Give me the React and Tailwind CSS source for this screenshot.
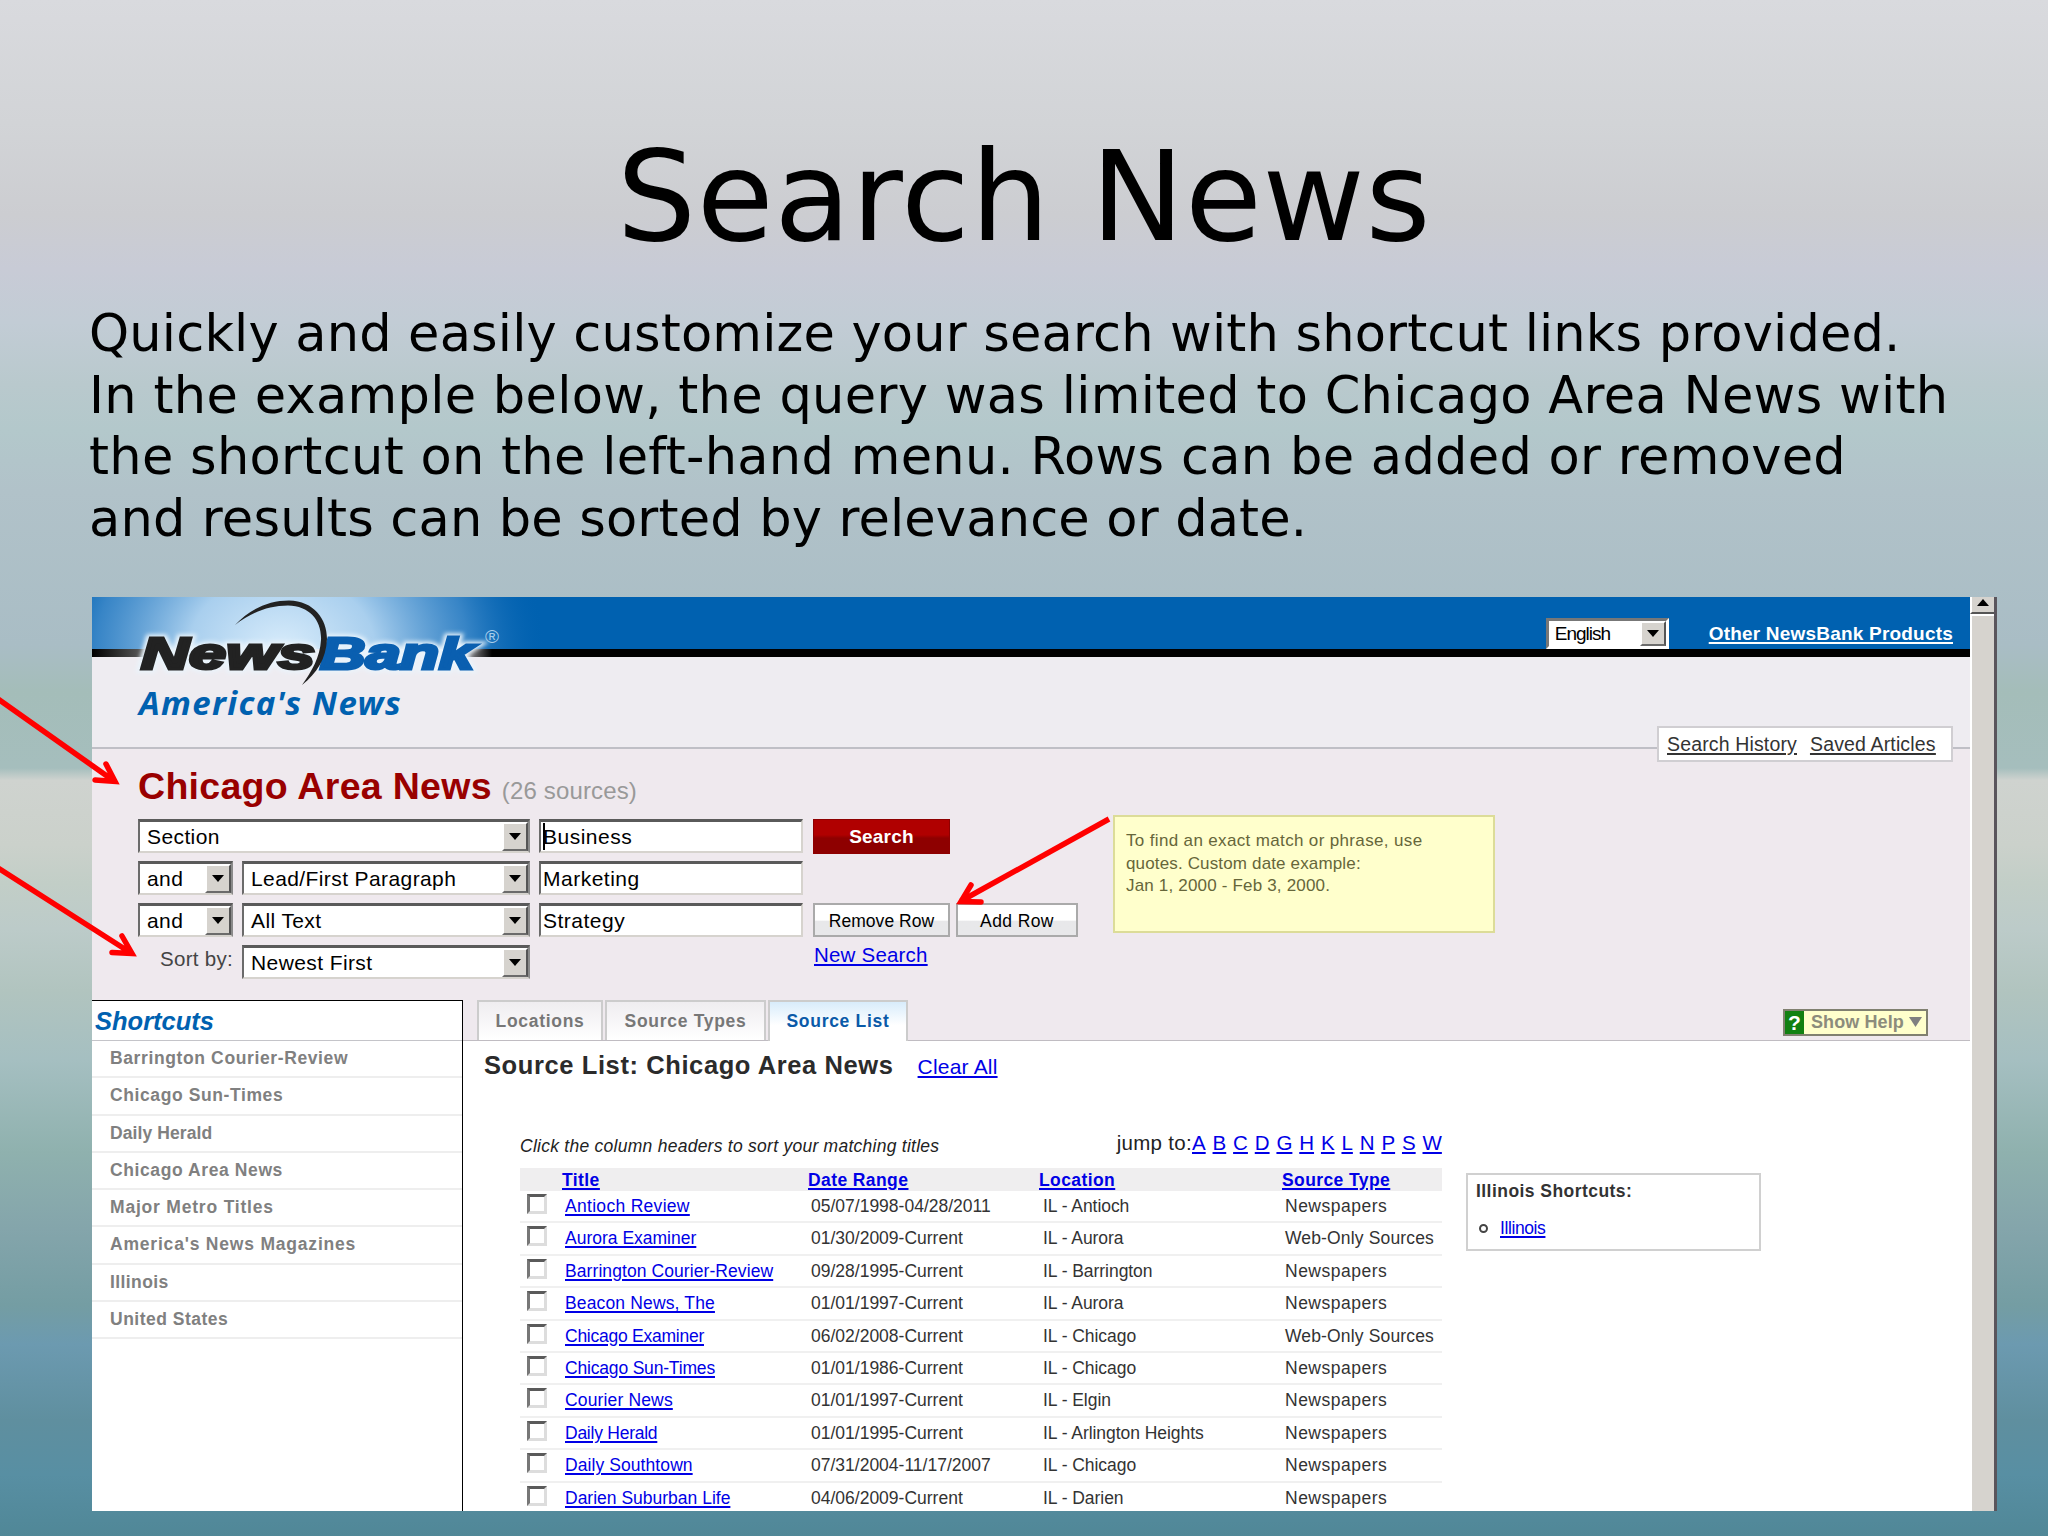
import React from 'react'

const shortcuts = [
    { name: "Barrington Courier-Review", tracking: "tracking-[0.62px]" },
    { name: "Chicago Sun-Times", tracking: "tracking-[0.6px]" },
    { name: "Daily Herald", tracking: "tracking-[0.1px]" },
    { name: "Chicago Area News", tracking: "tracking-[0.6px]" },
    { name: "Major Metro Titles", tracking: "tracking-[0.8px]" },
    { name: "America's News Magazines", tracking: "tracking-[0.8px]" },
    { name: "Illinois", tracking: "tracking-[0.4px]" },
    { name: "United States", tracking: "tracking-[0.5px]" },
]

const letters = ["A", "B", "C", "D", "G", "H", "K", "L", "N", "P", "S", "W"]

const sources = [
    { title: "Antioch Review", dates: "05/07/1998-04/28/2011", location: "IL - Antioch", type: "Newspapers", tracking: "tracking-[0.3px]" },
    { title: "Aurora Examiner", dates: "01/30/2009-Current", location: "IL - Aurora", type: "Web-Only Sources", tracking: "tracking-normal" },
    { title: "Barrington Courier-Review", dates: "09/28/1995-Current", location: "IL - Barrington", type: "Newspapers", tracking: "tracking-[0.08px]" },
    { title: "Beacon News, The", dates: "01/01/1997-Current", location: "IL - Aurora", type: "Newspapers", tracking: "tracking-[0.15px]" },
    { title: "Chicago Examiner", dates: "06/02/2008-Current", location: "IL - Chicago", type: "Web-Only Sources", tracking: "tracking-[-0.25px]" },
    { title: "Chicago Sun-Times", dates: "01/01/1986-Current", location: "IL - Chicago", type: "Newspapers", tracking: "tracking-[-0.18px]" },
    { title: "Courier News", dates: "01/01/1997-Current", location: "IL - Elgin", type: "Newspapers", tracking: "tracking-[0.15px]" },
    { title: "Daily Herald", dates: "01/01/1995-Current", location: "IL - Arlington Heights", type: "Newspapers", tracking: "tracking-[-0.25px]" },
    { title: "Daily Southtown", dates: "07/31/2004-11/17/2007", location: "IL - Chicago", type: "Newspapers", tracking: "tracking-[0.08px]" },
    { title: "Darien Suburban Life", dates: "04/06/2009-Current", location: "IL - Darien", type: "Newspapers", tracking: "tracking-normal" },
]

function Logo() {
    return (
        <svg className="absolute left-0 top-0" width="460" height="92" viewBox="0 0 460 92">
            <defs>
                <radialGradient id="glow" cx="190" cy="52" r="265" gradientUnits="userSpaceOnUse" gradientTransform="translate(0 10) scale(1 .8)">
                    <stop offset="0" stopColor="#d8ecfb" />
                    <stop offset=".35" stopColor="#a9cfee" />
                    <stop offset=".7" stopColor="#4a91ce" stopOpacity=".75" />
                    <stop offset="1" stopColor="#0060b0" stopOpacity="0" />
                </radialGradient>
                <linearGradient id="fade" x1="0" x2="1">
                    <stop offset="0" stopColor="#000" />
                    <stop offset=".12" stopColor="#555" />
                    <stop offset=".25" stopColor="#eeecf1" />
                    <stop offset=".9" stopColor="#eeecf1" />
                    <stop offset="1" stopColor="#000" />
                </linearGradient>
                <filter id="soft" x="-10%" y="-20%" width="120%" height="140%">
                    <feGaussianBlur stdDeviation="2" />
                </filter>
            </defs>
            <rect width="460" height="52" fill="url(#glow)" />
            <rect y="52" width="400" height="8" fill="url(#fade)" />
            <g fontFamily="Liberation Sans, sans-serif" fontWeight="bold" fontStyle="italic" fontSize="44" strokeLinejoin="miter">
                <g fill="#eaf4fc" stroke="#eaf4fc" strokeWidth="7" filter="url(#soft)">
                    <text x="49" y="72" textLength="174" lengthAdjust="spacingAndGlyphs">News</text>
                    <text x="228" y="72" textLength="154" lengthAdjust="spacingAndGlyphs">Bank</text>
                </g>
                <text x="49" y="72" textLength="174" lengthAdjust="spacingAndGlyphs" fill="#222" stroke="#222" strokeWidth="3">News</text>
                <text x="228" y="72" textLength="154" lengthAdjust="spacingAndGlyphs" fill="#0a5fb0" stroke="#0a5fb0" strokeWidth="3">Bank</text>
            </g>
            <path d="M143 28C158 12 177 3.500 197 3.500C222 4 235 22 235 42C234 62 225 76 210 88C220 74 228 60 229 43C230 24 218 9 196 8.500C176 8.500 158 16 143 28Z" fill="#222" />
            <text x="393" y="46" fontFamily="Liberation Sans, sans-serif" fontSize="19" fill="#a8cdea">®</text>
        </svg>
    )
}

function DropArrow() {
    return (
        <div className="w-[26px] h-full bg-[#d6d3ce] border-2 border-t-white border-l-white border-r-[#555] border-b-[#6b6b6b] flex items-center justify-center">
            <svg width="12" height="7" viewBox="0 0 12 7"><path d="M0 0h12L6 7Z" fill="#000" /></svg>
        </div>
    )
}

function Select({ label, className }) {
    return (
        <div className={`${className} h-[34px] bg-white border-2 border-t-[3px] border-t-[#5a5a5a] border-l-[#6b6b6b] border-r-[#8a8a8a] border-b-[#d6d3ce] flex items-center justify-between pl-[7px] text-[21px] leading-[28px] tracking-[0.4px]`}>
            <span>{label}</span>
            <DropArrow />
        </div>
    )
}

function TextBox({ value, cursor }) {
    return (
        <div className="w-[264px] h-[34px] bg-white border-2 border-t-[3px] border-t-[#5a5a5a] border-l-[#6b6b6b] border-r-[#d6d3ce] border-b-[#d6d3ce] flex items-center pl-[2px] text-[21px] leading-[28px] tracking-[0.5px]">
            {cursor && <span className="w-[2px] -mr-[2px] h-[27px] bg-black"></span>}
            <span>{value}</span>
        </div>
    )
}

function TopBar() {
    return (
        <div className="relative h-[60px] bg-[#0061b0] border-b-8 border-black flex justify-end items-start">
            <Logo />
            <div className="mt-[21px] w-[123px] h-[31px] bg-white border-[3px] border-t-[#777] border-l-[#777] border-r-white border-b-white flex justify-between pl-[6px] items-center">
                <span className="text-[19px] leading-[25px] tracking-[-1px]">English</span>
                <DropArrow />
            </div>
            <a className="mt-[27px] ml-[40px] mr-[17px] text-[19px] leading-[20px] tracking-[0.2px] font-bold text-white underline decoration-2 underline-offset-2">Other NewsBank Products</a>
        </div>
    )
}

function SearchForm() {
    return (
        <div className="h-[251px] pt-[15px] pl-[46px]">
            <div className="h-[44px] flex items-baseline">
                <h2 className="text-[37.5px] leading-[44px] tracking-[0.3px] font-bold text-[#990000]">Chicago Area News</h2>
                <span className="ml-[10px] text-[24px] tracking-[0.15px] text-[#999]">(26 sources)</span>
            </div>
            <div className="flex pt-[7px]">
                <div className="flex flex-col gap-2 pt-1">
                    <div className="flex gap-[9px]">
                        <Select label="Section" className="w-[392px]" />
                        <TextBox value="Business" cursor />
                    </div>
                    <div className="flex gap-[9px]">
                        <Select label="and" className="w-[95px]" />
                        <Select label="Lead/First Paragraph" className="w-[288px]" />
                        <TextBox value="Marketing" />
                    </div>
                    <div className="flex gap-[9px]">
                        <Select label="and" className="w-[95px]" />
                        <Select label="All Text" className="w-[288px]" />
                        <TextBox value="Strategy" />
                    </div>
                    <div className="flex gap-[9px]">
                        <div className="w-[95px] text-right text-[20.5px] leading-[28px] tracking-[0.3px] text-[#444]">Sort by:</div>
                        <Select label="Newest First" className="w-[288px]" />
                    </div>
                </div>
                <div className="ml-[10px] pt-1 w-[290px]">
                    <button className="block w-[137px] h-[35px] bg-linear-to-b from-[#b00000] from-45% to-[#8e0000] to-55% border border-[#8e0000] text-white font-bold text-[19px] leading-[34px] tracking-[0.2px]">Search</button>
                    <div className="mt-[49px] flex gap-[6px] text-[17.5px] leading-[32px]">
                        <button className="w-[137px] h-[34px] border-2 border-[#aaa] bg-linear-to-b from-white from-50% to-[#e8e8ea] to-55% tracking-[0.05px]">Remove Row</button>
                        <button className="w-[122px] h-[34px] border-2 border-[#aaa] bg-linear-to-b from-white from-50% to-[#e8e8ea] to-55% tracking-[0.4px]">Add Row</button>
                    </div>
                    <a className="inline-block mt-[6px] ml-px text-[20.5px] leading-[24px] tracking-[0.2px] text-[#0000e6] underline decoration-2 underline-offset-2">New Search</a>
                </div>
                <div className="ml-[10px] w-[382px] h-[118px] bg-[#ffffcc] border-2 border-[#dcdc98] pt-[13px] pl-[11px] text-[17px] leading-[22.7px] text-[#66663a]">
                    <span className="tracking-[0.35px]">To find an exact match or phrase, use</span><br />
                    <span className="tracking-[0.15px]">quotes. Custom date example:</span><br />
                    <span className="tracking-[0.18px]">Jan 1, 2000 - Feb 3, 2000.</span>
                </div>
            </div>
        </div>
    )
}

function Sidebar() {
    return (
        <div className="w-[371px] bg-white border-t border-r border-black">
            <div className="h-[40px] pl-[3px] border-b border-[#c4c4c9] text-[25.5px] leading-[41px] font-bold italic text-[#0061b0]">Shortcuts</div>
            {shortcuts.map((s) => (
                <div key={s.name} className="h-[37.25px] pl-[18px] border-b-2 border-[#eeeeee] text-[17.5px] leading-[35px] font-bold text-[#808080]">
                    <span className={s.tracking}>{s.name}</span>
                </div>
            ))}
        </div>
    )
}

function Tabs() {
    return (
        <div className="h-[41px] pl-[14px] pr-[42px] border-b border-[#c0bcc2] flex text-[17.5px] leading-[39px] tracking-[0.7px] font-bold text-[#777]">
            <div className="w-[126px] h-[40px] border-2 border-b-0 border-[#ccc] bg-linear-to-b from-[#efedf0] to-white text-center">Locations</div>
            <div className="ml-[2px] w-[161px] h-[40px] border-2 border-b-0 border-[#ccc] bg-linear-to-b from-[#efedf0] to-white text-center">Source Types</div>
            <div className="ml-[2px] w-[140px] h-[41px] border-2 border-b-0 border-[#ccc] bg-linear-to-b from-[#d8ecfb] to-white to-60% text-center text-[#0a5aa8]">Source List</div>
            <div className="ml-auto mt-[9px] w-[145px] h-[27px] border-2 border-[#808070] bg-[#ffffcc] flex items-center text-[18px] leading-[23px] tracking-[0.1px] text-[#8c8c7c]">
                <span className="w-[19px] h-full bg-[#118011] text-white text-center text-[21px]">?</span>
                <span className="ml-[7px]">Show Help</span>
                <svg className="ml-[5px] mb-[2px]" width="13" height="10" viewBox="0 0 13 10"><path d="M0 0h13L6.500 10Z" fill="#808080" /></svg>
            </div>
        </div>
    )
}

function SourceTable() {
    return (
        <div className="w-[922px]">
            <div className="h-[24px] flex justify-between text-[#222]">
                <span className="italic text-[17.5px] leading-[23px] tracking-[0.26px]">Click the column headers to sort your matching titles</span>
                <div className="flex text-[20.5px] leading-[16px]">
                    <span className="tracking-[0.3px]">jump to:</span>
                    <div className="w-[250px] flex justify-between text-[#0000e6]">
                        {letters.map((l) => <a key={l} className="underline decoration-2 underline-offset-2">{l}</a>)}
                    </div>
                </div>
            </div>
            <div className="mt-[9px] grid grid-cols-[288px_231px_243px_160px] bg-[#efeeef] h-[23px] text-[17.5px] leading-[25px] tracking-[0.4px] font-bold text-[#0000e6] underline decoration-2 underline-offset-2">
                <a className="pl-[42px]">Title</a>
                <a>Date Range</a>
                <a>Location</a>
                <a>Source Type</a>
            </div>
            {sources.map((s) => (
                <div key={s.title} className="grid grid-cols-[45px_246px_232px_242px_157px] h-[32.4px] border-b-2 border-[#f0f0f0] text-[17.5px] leading-[30px] text-[#333]">
                    <span className="ml-[7px] mt-[3px] w-[20px] h-[20px] bg-white border-[3px] border-t-[#5a5a5a] border-l-[#777] border-r-[#ddd] border-b-[#ddd]"></span>
                    <a className={`${s.tracking} text-[#0000e6] underline decoration-2 underline-offset-2`}>{s.title}</a>
                    <span>{s.dates}</span>
                    <span className="tracking-[-0.05px]">{s.location}</span>
                    <span className={s.type === "Newspapers" ? "tracking-[0.5px]" : "tracking-[0.15px]"}>{s.type}</span>
                </div>
            ))}
        </div>
    )
}

function SourceList() {
    return (
        <div className="bg-white h-[470px] flex">
            <div className="pl-[21px] pt-[8px]">
                <div className="h-[32px] flex items-baseline">
                    <h3 className="text-[25.5px] leading-[32px] tracking-[0.6px] font-bold text-[#2b2b2b]">Source List: Chicago Area News</h3>
                    <a className="ml-[24px] text-[21px] tracking-[0.2px] text-[#0000e6] underline decoration-2 underline-offset-2">Clear All</a>
                </div>
                <div className="pl-[36px] mt-[54px]"><SourceTable /></div>
            </div>
            <div className="ml-[24px] mt-[132px] w-[295px] h-[78px] border-2 border-[#d0d0d0] pl-2 text-[17.5px] text-[#333]">
                <div className="mt-[4px] leading-[24px] tracking-[0.45px] font-bold">Illinois Shortcuts:</div>
                <div className="mt-[13px] flex items-center leading-[24px]">
                    <span className="ml-[3px] w-[9px] h-[9px] rounded-full border-2 border-[#444]"></span>
                    <a className="ml-[12px] tracking-[-0.4px] text-[#0000e6] underline decoration-2 underline-offset-2">Illinois</a>
                </div>
            </div>
        </div>
    )
}

function App() {
    return (
        <div className="relative w-[2048px] h-[1536px] overflow-hidden flex flex-col bg-[linear-gradient(to_bottom,#d9dade_0%,#d2d4d7_8%,#cccdd1_14%,#c8cbd6_17.5%,#c2ccd5_21%,#b9c9cd_25%,#b3c8cb_28%,#b1c2c9_32%,#a9bdc5_42%,#a4bdb9_45%,#a5bebd_50%,#cfd3cf_50.8%,#cbd1cb_55%,#c2cec7_57.5%,#bccbc9_60.5%,#b1c4bf_64.5%,#a5bfc1_69%,#8fb1ae_75%,#84a5ab_80%,#749da3_85%,#6c9ab0_87.5%,#5f8f9f_92.5%,#588fa3_96%,#508797_100%)] font-['Liberation_Sans',sans-serif] text-black">
            <h1 className="mt-[122px] text-center text-[125px] leading-[150px] tracking-[0.7px] font-['DejaVu_Sans',sans-serif]">Search News</h1>
            <p className="mt-[31px] pl-[89px] text-[51px] leading-[61.5px] whitespace-nowrap font-['DejaVu_Sans',sans-serif]">
                <span className="tracking-[0.18px]">Quickly and easily customize your search with shortcut links provided.</span><br />
                <span className="tracking-[0.31px]">In the example below, the query was limited to Chicago Area News with</span><br />
                <span className="tracking-[0.3px]">the shortcut on the left-hand menu. Rows can be added or removed</span><br />
                <span className="tracking-[0.17px]">and results can be sorted by relevance or date.</span>
            </p>

            <div className="mt-[48px] ml-[92px] w-[1905px] h-[914px] flex overflow-hidden">
                <div className="w-[1878px] bg-[#efe9ee] flex flex-col">
                    <TopBar />
                    <div className="h-[92px] shrink-0 bg-[#eeecf1] border-b-2 border-[#bfbfc6] flex justify-between items-end">
                        <span className="ml-[47px] self-start mt-[24px] text-[33px] leading-[44px] tracking-[1.35px] font-bold italic text-[#0061b0] font-['Noto_Sans',sans-serif]">America's News</span>
                        <div className="-mb-[15px] mr-[17px] w-[296px] h-[36px] bg-white border-2 border-[#d0ced2] flex items-center gap-[13px] pl-[8px] text-[19.5px] leading-[28px] tracking-[0.15px] text-[#333] underline decoration-2 underline-offset-2">
                            <a>Search History</a>
                            <a>Saved Articles</a>
                        </div>
                    </div>
                    <SearchForm />
                    <div className="flex h-[511px]">
                        <Sidebar />
                        <div className="w-[1507px]">
                            <Tabs />
                            <SourceList />
                        </div>
                    </div>
                </div>
                <div className="w-[27px] bg-[#d6d3ce] border-r-[3px] border-[#5a555c]">
                    <div className="h-[17px] border-b-2 border-[#555] border-l-2 border-l-white flex items-start justify-center pt-[2px]">
                        <svg width="12" height="7" viewBox="0 0 12 7"><path d="M0 7h12L6 0Z" fill="#000" /></svg>
                    </div>
                    <div className="h-[897px] border-l-2 border-t-2 border-white"></div>
                </div>
            </div>

            {/* pointer arrows over the slide */}
            <svg className="absolute left-0 top-0" width="2048" height="1536" fill="none" stroke="#f00" strokeWidth="5.5">
                <path d="M-2 699L114 781M106 764L115 781.500L95 780" strokeLinecap="round" />
                <path d="M-2 868L131 953M122 936L132 953.500L112 952.500" strokeLinecap="round" />
                <path d="M1109 819L961 901" />
                <path d="M971 885L961 901.500L981 902" strokeLinecap="round" />
            </svg>
        </div>
    )
}

export default App
